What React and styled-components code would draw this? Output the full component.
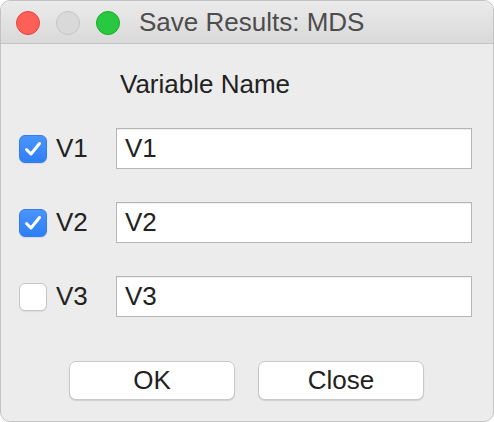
import styled, { createGlobalStyle } from "styled-components";

const GlobalStyle = createGlobalStyle`
    html, body {
        margin: 0;
        padding: 0;
        background: #ffffff;
    }
    body {
        font-family: "Liberation Sans", Arial, sans-serif;
    }
`;

const rows = [
    { id: "V1", checked: true },
    { id: "V2", checked: true },
    { id: "V3", checked: false },
];

export default function App() {
    return (
        <>
            <GlobalStyle />
            <Window>
                <TitleBar>
                    <Lights>
                        <Light color="#fe5f57" edge="#e0443e" />
                        <Light color="#d9d9d9" edge="#c4c4c4" />
                        <Light color="#28c840" edge="#1aab29" />
                    </Lights>
                    <Title>Save Results: MDS</Title>
                </TitleBar>
                <Content>
                    <Grid>
                        <span />
                        <Header>Variable Name</Header>
                        {rows.map((r) => (
                            <Row key={r.id}>
                                <CheckCell>
                                    <Box checked={r.checked}>
                                        {r.checked && (
                                            <svg width="28" height="28" viewBox="0 0 28 28">
                                                <path
                                                    d="M7.5 14.5 L12 19 L20.5 8.5"
                                                    fill="none"
                                                    stroke="#ffffff"
                                                    strokeWidth="3"
                                                    strokeLinecap="round"
                                                    strokeLinejoin="round"
                                                />
                                            </svg>
                                        )}
                                    </Box>
                                    <Label>{r.id}</Label>
                                </CheckCell>
                                <Field>{r.id}</Field>
                            </Row>
                        ))}
                    </Grid>
                    <Buttons>
                        <Button>OK</Button>
                        <Button>Close</Button>
                    </Buttons>
                </Content>
            </Window>
        </>
    );
}

const Window = styled.div`
    box-sizing: border-box;
    width: 494px;
    height: 422px;
    display: flex;
    flex-direction: column;
    background-color: #ececec;
    border: 1px solid #c3c3c3;
    border-radius: 10px;
    overflow: hidden;
`;

const TitleBar = styled.div`
    box-sizing: border-box;
    height: 43px;
    display: flex;
    align-items: center;
    padding-left: 15px;
    background: linear-gradient(#ebebeb, #d9d9d9);
    border-bottom: 1px solid #c4c4c4;
`;

const Lights = styled.div`
    display: flex;
    gap: 16px;
    margin-top: 1px;
`;

const Light = styled.div`
    box-sizing: border-box;
    width: 24px;
    height: 24px;
    border-radius: 50%;
    background-color: ${(p) => p.color};
    border: 1px solid ${(p) => p.edge};
`;

const Title = styled.div`
    margin-left: 19px;
    font-size: 26px;
    color: #4d4d4d;
    margin-top: 1px;
`;

const Content = styled.div`
    flex: 1;
    display: flex;
    flex-direction: column;
    padding: 22px 21px 0 18px;
`;

const Grid = styled.div`
    display: grid;
    grid-template-columns: 97px 1fr;
    row-gap: 33px;
`;

const Header = styled.div`
    font-size: 26px;
    color: #222222;
    padding-left: 4px;
    height: 37px;
    line-height: 37px;
    margin-bottom: -8px;
`;

const Row = styled.div`
    display: contents;
`;

const CheckCell = styled.div`
    display: flex;
    align-items: center;
    gap: 9px;
`;

const Box = styled.div`
    box-sizing: border-box;
    width: 28px;
    height: 28px;
    border-radius: 6px;
    display: flex;
    background: ${(p) => (p.checked ? "linear-gradient(#4a94fb, #2f7ef5)" : "#ffffff")};
    border: 1px solid ${(p) => (p.checked ? "#2f7ef5" : "#c6c6c6")};
    box-shadow: 0 1px 1px rgba(0, 0, 0, 0.08);
    svg {
        margin: -1px;
    }
`;

const Label = styled.span`
    font-size: 26px;
    color: #222222;
`;

const Field = styled.div`
    box-sizing: border-box;
    height: 41px;
    display: flex;
    align-items: center;
    padding-left: 8px;
    font-size: 26px;
    color: #222222;
    background-color: #ffffff;
    border: 1px solid #b5b5b5;
    box-shadow: inset 0 1px 0 #f0f0f0;
`;

const Buttons = styled.div`
    display: flex;
    justify-content: center;
    gap: 23px;
    margin-top: 44px;
    margin-left: 2px;
`;

const Button = styled.button`
    box-sizing: border-box;
    width: 166px;
    height: 39px;
    font-family: "Liberation Sans", Arial, sans-serif;
    font-size: 26px;
    color: #222222;
    background-color: #ffffff;
    border: 1px solid #c8c8c8;
    border-radius: 7px;
    box-shadow: 0 1px 1px rgba(0, 0, 0, 0.12);
    padding: 0;
`;
